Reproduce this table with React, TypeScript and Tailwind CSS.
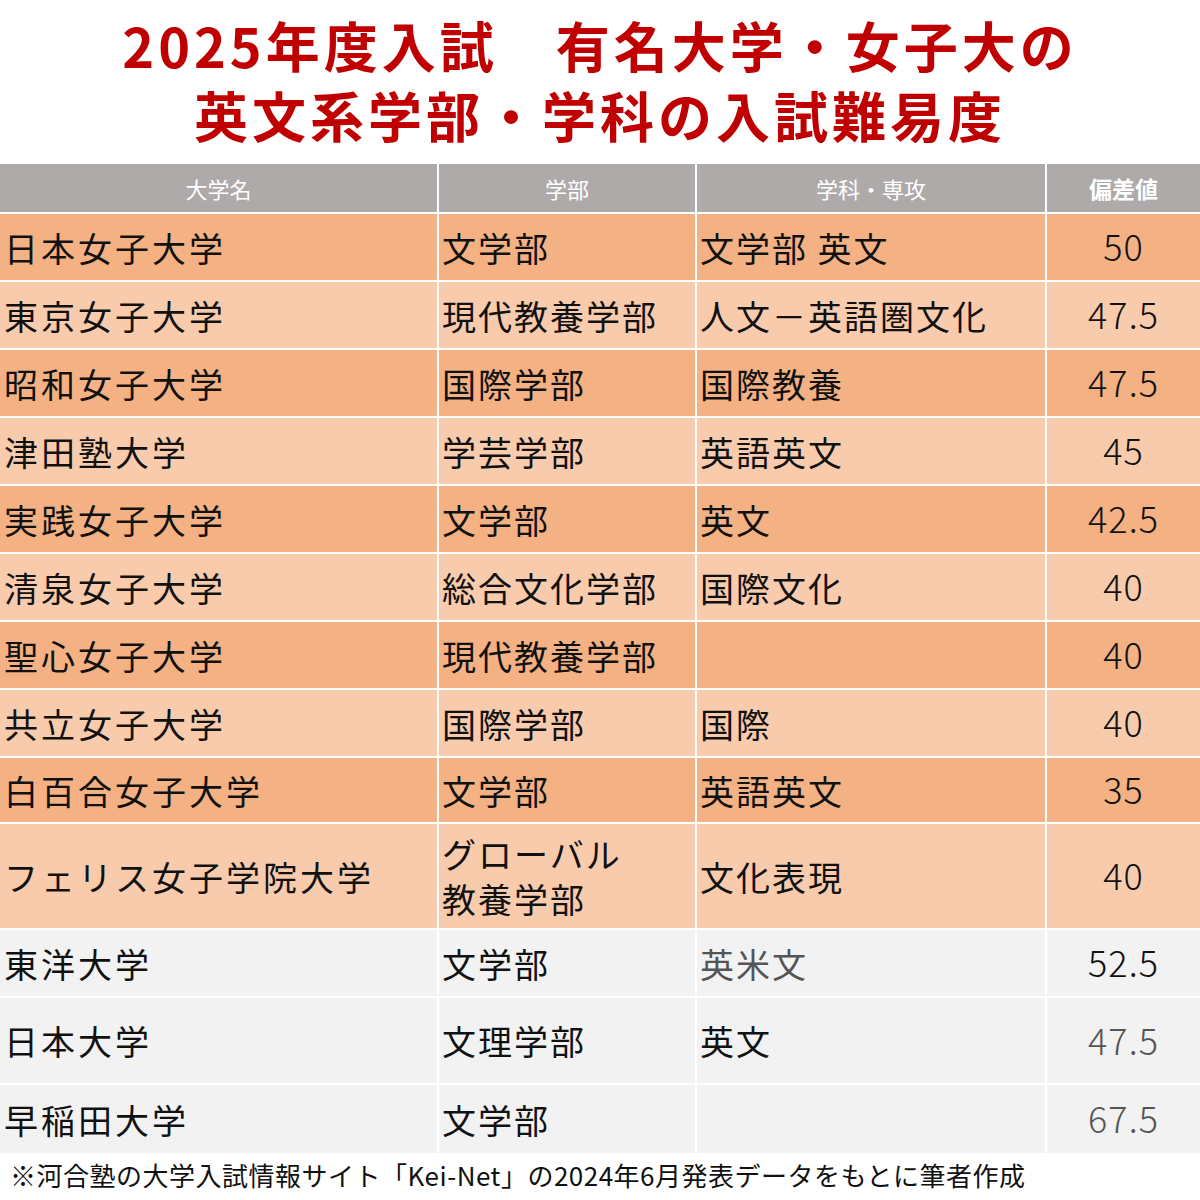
type Row = {
  name: string;
  faculty: React.ReactNode;
  dept: string;
  score: string;
  bg: string;
  h: string;
  deptGray?: boolean;
  scoreGray?: boolean;
};

const rows: Row[] = [
  { name: "日本女子大学", faculty: "文学部", dept: "文学部 英文", score: "50", bg: "bg-[#f4b183]", h: "h-[66px]" },
  { name: "東京女子大学", faculty: "現代教養学部", dept: "人文－英語圏文化", score: "47.5", bg: "bg-[#f8cbad]", h: "h-[66px]" },
  { name: "昭和女子大学", faculty: "国際学部", dept: "国際教養", score: "47.5", bg: "bg-[#f4b183]", h: "h-[66px]" },
  { name: "津田塾大学", faculty: "学芸学部", dept: "英語英文", score: "45", bg: "bg-[#f8cbad]", h: "h-[66px]" },
  { name: "実践女子大学", faculty: "文学部", dept: "英文", score: "42.5", bg: "bg-[#f4b183]", h: "h-[66px]" },
  { name: "清泉女子大学", faculty: "総合文化学部", dept: "国際文化", score: "40", bg: "bg-[#f8cbad]", h: "h-[66px]" },
  { name: "聖心女子大学", faculty: "現代教養学部", dept: "", score: "40", bg: "bg-[#f4b183]", h: "h-[66px]" },
  { name: "共立女子大学", faculty: "国際学部", dept: "国際", score: "40", bg: "bg-[#f8cbad]", h: "h-[66px]" },
  { name: "白百合女子大学", faculty: "文学部", dept: "英語英文", score: "35", bg: "bg-[#f4b183]", h: "h-[64px]" },
  {
    name: "フェリス女子学院大学",
    faculty: (
      <span className="leading-[45px]">
        グローバル
        <br />
        教養学部
      </span>
    ),
    dept: "文化表現",
    score: "40",
    bg: "bg-[#f8cbad]",
    h: "h-[104px]",
  },
  { name: "東洋大学", faculty: "文学部", dept: "英米文", score: "52.5", bg: "bg-[#f2f2f2]", h: "h-[66px]", deptGray: true },
  { name: "日本大学", faculty: "文理学部", dept: "英文", score: "47.5", bg: "bg-[#f2f2f2]", h: "h-[85px]", scoreGray: true },
  { name: "早稲田大学", faculty: "文学部", dept: "", score: "67.5", bg: "bg-[#f2f2f2]", h: "h-[68px]", scoreGray: true },
];

const font = "font-['Noto_Sans_CJK_JP','Noto_Sans',sans-serif]";

export default function App() {
  return (
    <div className={`w-[1200px] h-[1200px] bg-white overflow-hidden ${font}`}>
      <div className="pt-[10px] pb-[14px] text-center text-[#c00000] font-bold text-[54px] leading-[70px] tracking-[4px]">
        <div>2025年度入試　有名大学・女子大の</div>
        <div>英文系学部・学科の入試難易度</div>
      </div>

      <div className="grid grid-cols-[437px_256px_348px_1fr] gap-[2px] bg-white">
        <div className="h-[48px] bg-[#aeaaaa] flex items-center justify-center text-white text-[22px]">大学名</div>
        <div className="h-[48px] bg-[#aeaaaa] flex items-center justify-center text-white text-[22px]">学部</div>
        <div className="h-[48px] bg-[#aeaaaa] flex items-center justify-center text-white text-[22px]">学科・専攻</div>
        <div className="h-[48px] bg-[#aeaaaa] flex items-center justify-center text-white text-[23px] font-bold">偏差値</div>

        {rows.map((r) => (
          <>
            <div className={`${r.h} ${r.bg} flex items-center pl-[4px] text-[34px] tracking-[3px] text-[#111]`}>{r.name}</div>
            <div className={`${r.h} ${r.bg} flex items-center pl-[3px] text-[34px] tracking-[2px] text-[#111]`}>{r.faculty}</div>
            <div className={`${r.h} ${r.bg} flex items-center pl-[3px] text-[34px] tracking-[2px] ${r.deptGray ? "text-[#555]" : "text-[#111]"}`}>{r.dept}</div>
            <div className={`${r.h} ${r.bg} flex items-center justify-center pb-[4px] text-[36px] font-light tracking-[1px] ${r.scoreGray ? "text-[#555]" : "text-[#111]"}`}>{r.score}</div>
          </>
        ))}
      </div>

      <div className="pl-[10px] pt-[4px] text-[26px] leading-[36px] tracking-[0.5px] text-[#111]">
        ※河合塾の大学入試情報サイト「Kei-Net」の2024年6月発表データをもとに筆者作成
      </div>
    </div>
  );
}
